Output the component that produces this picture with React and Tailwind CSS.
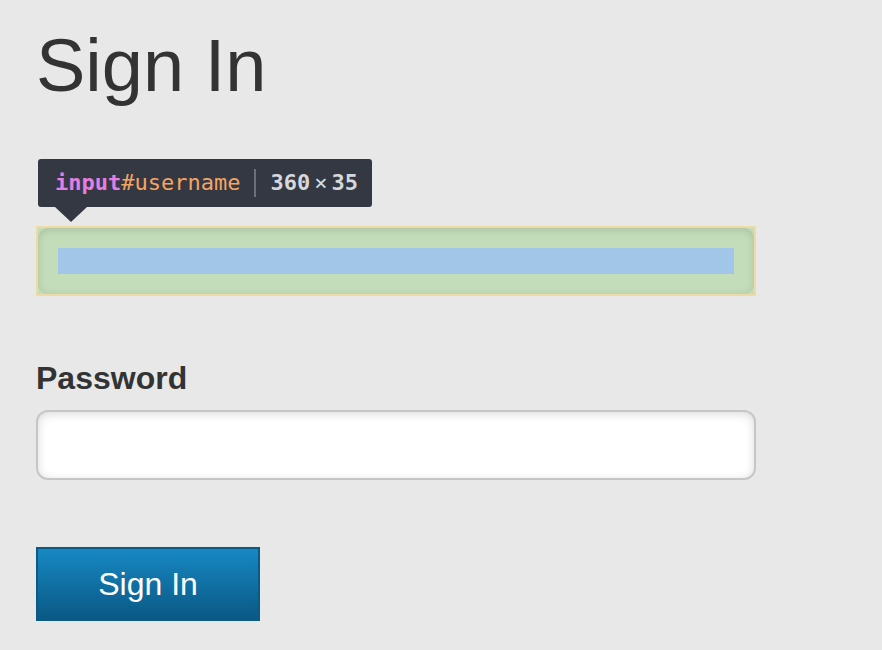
import React from 'react';

const Tooltip = () => (
  <div className="absolute left-[2px] top-[-67px]">
    <div className="flex h-[48px] w-[334px] items-center rounded-[3px] bg-[#343843] pl-[17px] font-['DejaVu_Sans_Mono',monospace] text-[22px] leading-none">
      <span className="font-bold text-[#e37ee3]">input</span>
      <span className="text-[#f4a563]">#username</span>
      <span className="mx-[14px] h-[28px] w-[2px] bg-[#6b6f78]" />
      <span className="font-bold text-[#d6d8dc]">360</span>
      <span className="mx-[4px] text-[#d6d8dc]">×</span>
      <span className="font-bold text-[#d6d8dc]">35</span>
    </div>
    {/* arrow */}
    <div className="ml-[17px] h-0 w-0 border-x-[16px] border-t-[15px] border-x-transparent border-t-[#343843]" />
  </div>
);

export default function App() {
  return (
    <div className="min-h-screen bg-[#e8e8e8] pl-[36px] pt-[28px] font-['Liberation_Sans',Arial,sans-serif] text-[#333]">
      <h1 className="text-[74px] leading-[76px]">Sign In</h1>

      {/* username input with devtools highlight */}
      <div className="relative mt-[122px]">
        <Tooltip />
        <div className="h-[70px] w-[720px] border-[2px] border-[#efdaa4] bg-[#c3dcb9]">
          <div className="flex h-full w-full items-center rounded-[10px] px-[20px] shadow-[inset_0_2px_8px_rgba(0,0,0,0.12)]">
            <div className="h-[26px] w-full bg-[#a2c6e8]" />
          </div>
        </div>
      </div>

      <label className="mt-[62px] block text-[32px] font-bold leading-[40px]">Password</label>
      <div className="mt-[12px] h-[70px] w-[720px] rounded-[12px] border-[2px] border-[#c6c6c6] bg-white shadow-[inset_0_2px_10px_rgba(0,0,0,0.15)]" />

      <button className="mt-[67px] flex h-[74px] w-[224px] items-center justify-center border-[2px] border-[#0b5a86] bg-gradient-to-b from-[#1788c3] to-[#0a5985] text-[32px] text-white">
        Sign In
      </button>
    </div>
  );
}
